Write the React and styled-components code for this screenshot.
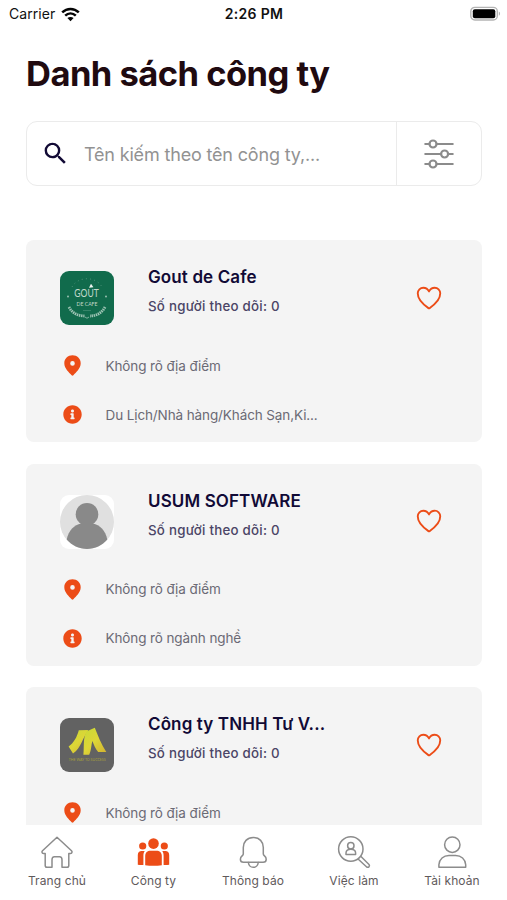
import React from 'react';
import styled, { createGlobalStyle } from 'styled-components';
import { MdSearch } from 'react-icons/md';
import { FaInfoCircle } from 'react-icons/fa';
import { IoHeartOutline } from 'react-icons/io5';

const GlobalStyle = createGlobalStyle`
    * {
        box-sizing: border-box;
    }
    body {
        margin: 0;
        background-color: white;
        font-family: Inter, "Noto Sans", sans-serif;
    }
`

const Screen = styled.div`
    display: flex;
    flex-direction: column;
    width: 507px;
    height: 900px;
    overflow: hidden;
    background-color: white;
`

const StatusBar = styled.div`
    display: grid;
    grid-template-columns: 1fr auto 1fr;
    align-items: center;
    height: 28px;
    padding: 0 6px 0 9px;
    font-size: 14px;
    line-height: 28px;
    color: #111;
`

const Carrier = styled.div`
    display: flex;
    align-items: center;
    gap: 6px;
    letter-spacing: 0.05px;
`

const Clock = styled.div`
    margin-right: 2px;
    font-weight: 600;
    letter-spacing: 0.3px;
`

const Battery = styled.svg`
    justify-self: end;
`

const Title = styled.h1`
    margin: 24px 0 0 26px;
    font-size: 34.5px;
    line-height: 44px;
    font-weight: 700;
    letter-spacing: -0.52px;
    color: #200a10;
    white-space: nowrap;
`

const SearchBox = styled.div`
    display: flex;
    flex: none;
    width: 456px;
    height: 65px;
    margin: 25px 0 0 26px;
    border: 1px solid #ebebeb;
    border-radius: 11px;
`

const SearchField = styled.div`
    display: flex;
    flex: 1;
    align-items: center;
    padding-left: 14px;
    gap: 14px;
    font-size: 18px;
    color: #929292;
    white-space: nowrap;

    svg {
        color: #120a35;
    }
`

const Placeholder = styled.span`
    padding-top: 2px;
    letter-spacing: -0.17px;
`

const FilterButton = styled.div`
    display: flex;
    align-items: center;
    justify-content: center;
    width: 85px;
    border-left: 1px solid #ebebeb;
`

const CompanyList = styled.div`
    display: flex;
    flex: 1;
    flex-direction: column;
    gap: 21.4px;
    min-height: 0;
    margin-top: 54px;
    padding: 0 25.5px 0 26px;
    overflow: hidden;
`

const Card = styled.div`
    flex: none;
    height: 202.2px;
    padding: 25px 38px 0 34px;
    border-radius: 8px;
    background-color: #f4f4f4;
`

const CardHeader = styled.div`
    display: flex;
    align-items: center;
    height: 66px;
`

const Avatar = styled.svg`
    flex: none;
    width: 54px;
    height: 54px;
    border-radius: 9px;
`

const CardTitles = styled.div`
    flex: 1;
    height: 66px;
    margin-left: 34px;
    white-space: nowrap;
`

const CompanyName = styled.div`
    font-size: 17px;
    line-height: 24px;
    font-weight: 600;
    letter-spacing: 0.12px;
    color: #110a36;
`

const Followers = styled.div`
    margin-top: 4px;
    font-size: 13.3px;
    line-height: 26px;
    font-weight: 500;
    letter-spacing: 0.25px;
    color: #4b4566;
`

const HeartButton = styled.div`
    display: flex;
    margin-bottom: 1px;
    color: #ec4c17;
`

const InfoRows = styled.div`
    margin-top: 10px;
`

const InfoRow = styled.div`
    display: flex;
    align-items: center;
    height: 49px;
    font-size: 13.5px;
    letter-spacing: -0.11px;
    color: #6b6a75;
    white-space: nowrap;

    svg {
        flex: none;
        color: #ec4c17;
    }
`

const IconSlot = styled.div`
    display: flex;
    justify-content: center;
    width: 25px;
    margin-right: 20.5px;
`

const TabBar = styled.div`
    display: grid;
    flex: none;
    grid-template-columns: 98px 95px 104px 98px 98px;
    height: 75.5px;
    padding: 10.5px 6px 0 8px;
    background-color: white;
`

const Tab = styled.div`
    display: flex;
    flex-direction: column;
    align-items: center;
    font-size: 12px;
    line-height: 24px;
    letter-spacing: 0.1px;
    color: #5f5a5c;
    white-space: nowrap;
`

const TabIcon = styled.svg`
    width: 34px;
    height: 34px;
    fill: none;
    stroke: #8c8c8c;
    stroke-width: 1.5;
    stroke-linejoin: round;
    stroke-linecap: round;
`

const PinIcon = () => (
    <svg width="17" height="21" viewBox="0 0 17 21">
        <path fill="currentColor" fillRule="evenodd" d="M8.5 0.3C3.9 0.3 0.3 3.8 0.3 8.3C0.3 13.6 5.1 17.4 7.6 20.3Q8.5 21.2 9.4 20.3C11.9 17.4 16.7 13.6 16.7 8.3C16.7 3.8 13.1 0.3 8.5 0.3ZM8.5 6.1a2.3 2.3 0 1 1 0 4.6a2.3 2.3 0 0 1 0-4.6Z" />
    </svg>
)

const WifiIcon = () => (
    <svg width="19" height="15" viewBox="0 0 19 15" fill="none" stroke="#050505" strokeWidth="2.5">
        <path d="M1.2 5.4C6 0.8 13 0.8 17.8 5.4" />
        <path d="M4.2 8.6C7.3 5.7 11.7 5.7 14.8 8.6" />
        <path d="M9.5 14.2L6.4 11.1C8.2 9.5 10.8 9.5 12.6 11.1Z" fill="#050505" stroke="none" />
    </svg>
)

const FilterIcon = () => (
    <svg width="30" height="30" viewBox="0 0 30 30" fill="none" stroke="#8b8b8b" strokeWidth="2.2" strokeLinecap="round">
        <path d="M1.3 5H5.2M12.8 5H28.7M1.3 15H16.8M24.4 15H28.7M1.3 25H5.2M12.8 25H28.7" />
        <circle cx="9" cy="5" r="3.5" />
        <circle cx="20.6" cy="15" r="3.5" />
        <circle cx="9" cy="25" r="3.5" />
    </svg>
)

const CafeLogo = () => (
    <Avatar viewBox="0 0 54 54">
        <rect width="54" height="54" fill="#116b4c" />
        <path d="M12 16C18 5 36 5 42 16" fill="none" stroke="#5d9a83" strokeWidth="0.8" strokeDasharray="1 3.2" />
        <g fill="#c2d8cd" fontFamily="Lato, sans-serif">
            <text x="14.3" y="26.3" fontSize="12" fontWeight="400" textLength="24.5" lengthAdjust="spacingAndGlyphs">GOUT</text>
            <text x="16.5" y="35" fontSize="6.5" fontWeight="400" textLength="21" lengthAdjust="spacingAndGlyphs">DE CAFE</text>
        </g>
        <path d="M29 16.8L31 12.8L33.4 16.2Z" fill="#eef5f1" />
        <circle cx="8" cy="25.5" r="0.9" fill="#a5c7b9" />
        <circle cx="46" cy="25.5" r="0.9" fill="#a5c7b9" />
        <path d="M23 39.5H31" stroke="#3f8a70" strokeWidth="0.8" />
        <path d="M9 36C12 42 18 45 24.5 45M45 36C42 42 36 45 30 45" fill="none" stroke="#9cc3b3" strokeWidth="2.8" strokeDasharray="1.5 0.7" />
        <path d="M25 46Q27 48.5 29 46" fill="none" stroke="#9cc3b3" strokeWidth="0.8" />
    </Avatar>
)

const PersonAvatar = () => (
    <Avatar viewBox="0 0 54 54">
        <rect width="54" height="54" fill="white" />
        <circle cx="27" cy="27" r="27" fill="#e0e0e0" />
        <circle cx="27" cy="19.3" r="11.3" fill="#898989" />
        <path d="M6.7 44.5C8.5 35.5 14.5 30 21 28.6H33C39.5 30 45.5 35.5 47.3 44.5C42.3 50.3 35 54 27 54S11.7 50.3 6.7 44.5Z" fill="#898989" />
    </Avatar>
)

const AdvisoryLogo = () => (
    <Avatar viewBox="0 0 54 54">
        <defs>
            <linearGradient id="gold" x1="0" y1="0" x2="0.8" y2="1">
                <stop offset="0" stopColor="#c8d936" />
                <stop offset="0.55" stopColor="#ddd637" />
                <stop offset="1" stopColor="#d3b631" />
            </linearGradient>
        </defs>
        <rect width="54" height="54" fill="#626262" />
        <path d="M18.8 12.3L28.3 12C22.5 20 21.5 29.5 13 35.6L8.6 28.5C13.8 25 17 19 18.8 12.3Z" fill="url(#gold)" />
        <path d="M26.3 13.5L34.8 9.8C38 18 41.2 26 46.3 34H38.2C35.4 31.2 33.8 26.5 32.4 23C31 27.5 31.6 31.5 29.2 36.8H23.4C24.3 29 22.8 21 26.3 13.5Z" fill="url(#gold)" />
        <text x="8.7" y="42.5" fontFamily="Lato, sans-serif" fontSize="4" fill="#a5a13c" textLength="37" lengthAdjust="spacingAndGlyphs">THE WAY TO SUCCESS</text>
    </Avatar>
)

const companies = [
    { name: "Gout de Cafe", Logo: CafeLogo, place: "Không rõ địa điểm", field: "Du Lịch/Nhà hàng/Khách Sạn,Ki..." },
    { name: "USUM SOFTWARE", Logo: PersonAvatar, place: "Không rõ địa điểm", field: "Không rõ ngành nghề" },
    { name: "Công ty TNHH Tư V...", Logo: AdvisoryLogo, place: "Không rõ địa điểm" },
];

const tabs = [
    {
        label: "Trang chủ",
        icon: <path d="M17 2.3L2.5 15.7C1.3 17 2.2 18.5 3.8 18.5H5.2V30.5Q5.2 32.3 7 32.3H12V24.8Q12 21.7 14.4 21.7H19.6Q22 21.7 22 24.8V32.3H27Q28.8 32.3 28.8 30.5V18.5H30.2C31.8 18.5 32.7 17 31.5 15.7Z" />
    },
    {
        label: "Công ty",
        icon: (
            <g fill="#ec4c17" stroke="none">
                <circle cx="16.5" cy="8.6" r="5.3" />
                <circle cx="5.7" cy="11" r="3.6" />
                <circle cx="27.3" cy="11" r="3.6" />
                <path d="M8.2 30.2V21C8.2 17.5 10.5 15.7 13.5 15.7H19.5C22.5 15.7 24.8 17.5 24.8 21V30.2Q16.5 31.2 8.2 30.2Z" />
                <path d="M0.8 29.7V20C0.8 17.5 2.3 16 4.7 16H7.7C6.7 17.5 6.4 19 6.4 21V30Q3.5 30.2 0.8 29.7ZM32.2 29.7V20C32.2 17.5 30.7 16 28.3 16H25.3C26.3 17.5 26.6 19 26.6 21V30Q29.5 30.2 32.2 29.7Z" />
            </g>
        )
    },
    {
        label: "Thông báo",
        icon: (
            <>
                <path d="M17.3 2.5C11.1 2.5 7.3 6.8 7.3 12.5V19C7.3 21 4.4 21 4.4 24.2C4.4 26.2 5.5 27.3 7.5 27.3H27.1C29.1 27.3 30.2 26.2 30.2 24.2C30.2 21 27.3 21 27.3 19V12.5C27.3 6.8 23.5 2.5 17.3 2.5Z" />
                <path d="M12.3 27.5C12.8 30.5 14.6 32.3 17.3 32.3S21.8 30.5 22.3 27.5" />
            </>
        )
    },
    {
        label: "Việc làm",
        icon: (
            <>
                <circle cx="13.8" cy="14" r="12.2" />
                <circle cx="13.8" cy="10.8" r="3.2" />
                <path d="M9 19.4V18C9 15.4 11 14.2 13.8 14.2S18.6 15.4 18.6 18V19.4Z" />
                <path d="M21.3 24.3L29.7 32C31.6 33 33.2 31 32 29.5L24 21.5" />
            </>
        )
    },
    {
        label: "Tài khoản",
        icon: (
            <>
                <circle cx="17.3" cy="9.7" r="7.7" />
                <path d="M3.9 32.3V29.7C4.3 24 8.5 20.5 14 20.5H20.6C26.1 20.5 30.3 24 30.7 29.7V32.3Z" />
            </>
        )
    },
];

const CompanyCard = ({ company }) => {
    const { name, Logo, place, field } = company;
    return (
        <Card>
            <CardHeader>
                <Logo />
                <CardTitles>
                    <CompanyName>{name}</CompanyName>
                    <Followers>Số người theo dõi: 0</Followers>
                </CardTitles>
                <HeartButton><IoHeartOutline size={30} /></HeartButton>
            </CardHeader>
            <InfoRows>
                <InfoRow>
                    <IconSlot><PinIcon /></IconSlot>
                    {place}
                </InfoRow>
                {field && (
                    <InfoRow>
                        <IconSlot><FaInfoCircle size={19} /></IconSlot>
                        {field}
                    </InfoRow>
                )}
            </InfoRows>
        </Card>
    );
}

const App = () => (
    <Screen>
        <GlobalStyle />
        <StatusBar>
            <Carrier>Carrier <WifiIcon /></Carrier>
            <Clock>2:26 PM</Clock>
            <Battery width="32" height="16" viewBox="0 0 32 16">
                <rect x="1.8" y="1.4" width="26.5" height="12.6" rx="4" fill="white" stroke="#b4b4b4" strokeWidth="1.4" />
                <rect x="3.8" y="3.2" width="22.5" height="9" rx="2" fill="black" />
                <path d="M29.8 5.6C31.5 6.2 31.5 9.2 29.8 9.8Z" fill="#b4b4b4" />
            </Battery>
        </StatusBar>
        <Title>Danh sách công ty</Title>
        <SearchBox>
            <SearchField>
                <MdSearch size={29} />
                <Placeholder>Tên kiếm theo tên công ty,...</Placeholder>
            </SearchField>
            <FilterButton>
                <FilterIcon />
            </FilterButton>
        </SearchBox>
        <CompanyList>
            {companies.map((company) => (
                <CompanyCard key={company.name} company={company} />
            ))}
        </CompanyList>
        <TabBar>
            {tabs.map((tab) => (
                <Tab key={tab.label}>
                    <TabIcon viewBox="0 0 34 34">{tab.icon}</TabIcon>
                    {tab.label}
                </Tab>
            ))}
        </TabBar>
    </Screen>
)

export default App;
